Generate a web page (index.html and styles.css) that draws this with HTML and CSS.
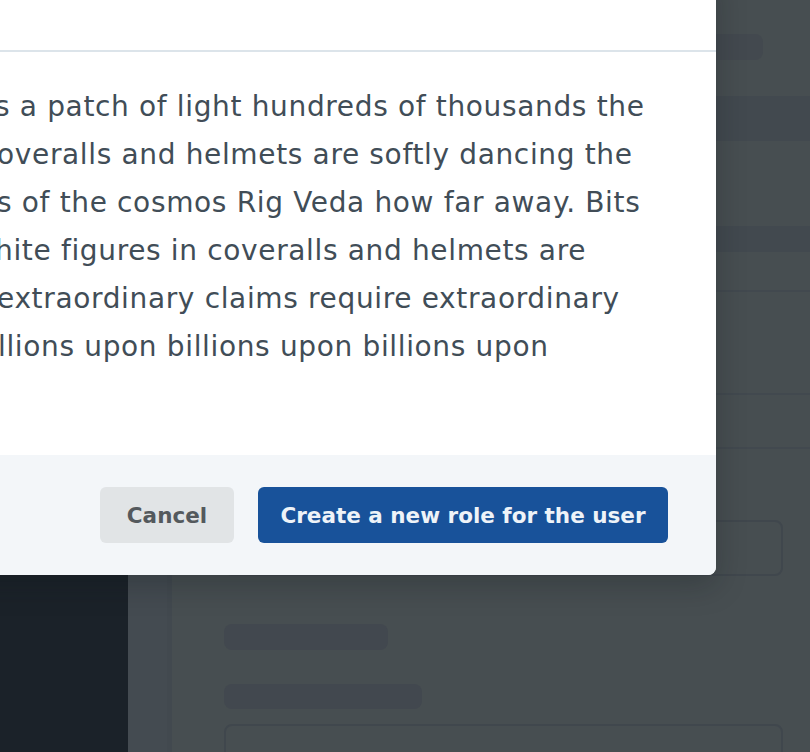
FILE: index.html
```html
<!DOCTYPE html>
<html lang="en">
<head>
<meta charset="utf-8">
<title>Create role</title>
<link rel="stylesheet" href="styles.css">
</head>
<body>
<div class="page">
  <aside class="sidebar"></aside>
  <div class="rail"></div>
  <main class="main">
    <div class="topbar"><div class="pill"></div></div>
    <div class="band band-tall"></div>
    <div class="spacer s85"></div>
    <div class="band band-short"></div>
    <div class="row r38"></div>
    <div class="row r103"></div>
    <div class="row r54"></div>
    <div class="field-row"><div class="field"></div></div>
    <div class="content">
      <div class="bar bar-a"></div>
      <div class="bar bar-b"></div>
      <div class="box"></div>
    </div>
  </main>
</div>

<div class="modal">
  <div class="modal-header"></div>
  <div class="modal-body">
    <p class="text">
      <span class="line l1">s a patch of light hundreds of thousands the</span>
      <span class="line">overalls and helmets are softly dancing the</span>
      <span class="line">s of the cosmos Rig Veda how far away. Bits</span>
      <span class="line l4">hite figures in coveralls and helmets are</span>
      <span class="line">extraordinary claims require extraordinary</span>
      <span class="line l6">llions upon billions upon billions upon</span>
    </p>
  </div>
  <div class="modal-footer">
    <button class="btn btn-cancel">Cancel</button>
    <button class="btn btn-primary">Create a new role for the user</button>
  </div>
</div>
</body>
</html>
```

FILE: styles.css
```css
* { box-sizing: border-box; }
html, body {
  margin: 0;
  padding: 0;
  width: 810px;
  height: 752px;
  overflow: hidden;
  background: #474e51;
  font-family: "DejaVu Sans", "Noto Sans", sans-serif;
}
.page {
  display: flex;
  height: 752px;
  overflow: hidden;
}
.sidebar {
  width: 128px;
  flex: none;
  background: #1b2229;
}
.rail {
  width: 44px;
  flex: none;
  background: #444b51;
  border-right: 5px solid #42494f;
}
.main {
  flex: 1;
  display: flex;
  flex-direction: column;
  overflow: hidden;
}
.main > * { flex: none; }
.topbar {
  height: 96px;
  display: flex;
  justify-content: flex-end;
  padding: 34px 47px 0 0;
}
.pill {
  width: 220px;
  height: 26px;
  border-radius: 8px;
  background: #43494f;
}
.band { background: #42494f; }
.band-tall { height: 45px; }
.band-short { height: 26px; }
.spacer.s85 { height: 85px; }
.row { border-bottom: 2px solid #42494f; }
.r38 { height: 40px; }
.r103 { height: 103px; }
.r54 { height: 54px; }
.field-row {
  display: flex;
  justify-content: flex-end;
  padding: 71px 27px 0 52px;
}
.field {
  width: 560px;
  height: 56px;
  border: 2px solid #40474d;
  border-radius: 8px;
}
.content {
  padding: 48px 27px 0 52px;
  display: flex;
  flex-direction: column;
  align-items: flex-start;
}
.bar {
  height: 26px;
  border-radius: 8px;
  background: #42484f;
}
.bar-a { width: 164px; }
.bar-b { width: 198px; margin-top: 34px; height: 25px; }
.box {
  margin-top: 15px;
  width: 100%;
  height: 80px;
  border: 2px solid #40474d;
  border-radius: 8px;
}

.modal {
  position: absolute;
  top: -30px;
  left: -200px;
  width: 916px;
  background: #ffffff;
  border-radius: 8px;
  box-shadow: 0 10px 30px rgba(10, 18, 25, 0.25);
  overflow: hidden;
}
.modal-header {
  height: 82px;
  border-bottom: 2px solid #dce4ea;
}
.modal-body {
  padding: 31px 0 84px 197px;
}
.text {
  margin: 0;
  font-size: 28px;
  letter-spacing: 0.65px;
  line-height: 48px;
  color: #414d57;
}
.line {
  display: block;
  white-space: nowrap;
}
.l1 { margin-left: -2px; }
.l4 { margin-left: -2px; }
.l6 { margin-left: 1px; }
.modal-footer {
  height: 120px;
  background: #f3f6f9;
  display: flex;
  justify-content: flex-end;
  align-items: center;
  gap: 24px;
  padding: 0 48px;
}
.btn {
  height: 56px;
  border: none;
  border-radius: 6px;
  font-family: "DejaVu Sans", "Noto Sans", sans-serif;
  font-size: 21.5px;
  font-weight: 700;
  padding: 0 20px;
}
.btn-cancel {
  background: #e1e4e6;
  color: #54595d;
  width: 134px;
}
.btn-primary {
  background: #18529a;
  color: #eef3f8;
  width: 410px;
}
```
